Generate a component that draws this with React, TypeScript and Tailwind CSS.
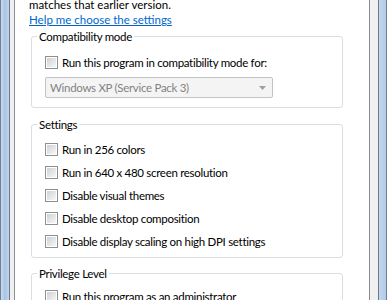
import React from "react";

const font = { fontFamily: 'Lato, "Liberation Sans", sans-serif' };

function Box() {
  return (
    <span className="w-[13px] h-[13px] shrink-0 border border-[#8e8f8f] bg-white flex items-center justify-center">
      <span className="w-[9px] h-[9px] bg-gradient-to-br from-[#cfd1d4] to-[#f7f7f7]" />
    </span>
  );
}

function Check({ label }: { label: string }) {
  return (
    <div className="flex items-center h-[23px] gap-[4px]">
      <Box />
      <span>{label}</span>
    </div>
  );
}

export default function App() {
  return (
    <div className="w-[387px] h-[300px] overflow-hidden flex text-[11.5px] tracking-[-0.3px] leading-[15px] text-black bg-[#f0f0f0]" style={font}>
      {/* left frame */}
      <div className="w-px bg-[#6f7f90]" />
      <div className="w-[8px] bg-gradient-to-r from-[#c9dbef] via-[#a9c3e2] to-[#c3d6ee]" />
      <div className="w-px bg-[#6b7a8a]" />
      <div className="w-[4px] bg-[#f0f0f0]" />
      <div className="w-px bg-[#898c95]" />
      {/* content */}
      <div className="w-[354px] bg-white pl-[14px]">
        <div className="mt-[-3px] tracking-normal">matches that earlier version.</div>
        <div className="text-[#0066cc] underline tracking-normal">Help me choose the settings</div>

        <fieldset className="mt-[2px] ml-[2px] w-[312px] border border-[#d5dfe5] rounded-[3px] pl-[13px] pt-[11px] pb-[9px]">
          <legend className="ml-[-8px] px-[2px]">Compatibility mode</legend>
          <div className="flex items-center h-[15px] gap-[4px]">
            <Box />
            <span>Run this program in compatibility mode for:</span>
          </div>
          <div className="mt-[7px] w-[228px] h-[21px] border border-[#c3c3c3] rounded-[2px] bg-[#f4f4f4] flex items-center justify-between pl-[4px] pr-[6px] text-[#838383]">
            <span>Windows XP (Service Pack 3)</span>
            <svg width="7" height="4" viewBox="0 0 7 4"><path d="M0 0h7L3.5 4z" fill="#a0a0a0" /></svg>
          </div>
        </fieldset>

        <fieldset className="mt-[9px] ml-[2px] w-[312px] border border-[#d5dfe5] rounded-[3px] pl-[13px] pt-[6px] pb-[4px]">
          <legend className="ml-[-8px] px-[2px]">Settings</legend>
          <Check label="Run in 256 colors" />
          <Check label="Run in 640 x 480 screen resolution" />
          <Check label="Disable visual themes" />
          <Check label="Disable desktop composition" />
          <Check label="Disable display scaling on high DPI settings" />
        </fieldset>

        <fieldset className="mt-[8px] ml-[2px] w-[312px] border border-[#d5dfe5] rounded-[3px] pl-[13px] pt-[4px] pb-[4px]">
          <legend className="ml-[-8px] px-[2px]">Privilege Level</legend>
          <Check label="Run this program as an administrator" />
        </fieldset>
      </div>
      {/* right frame */}
      <div className="w-px bg-[#898c95]" />
      <div className="w-[8px] bg-[#f0f0f0]" />
      <div className="w-px bg-[#6b7a8a]" />
      <div className="w-[7px] bg-gradient-to-r from-[#c3d6ee] to-[#b3cbe8]" />
      <div className="w-px bg-[#6f7f90]" />
    </div>
  );
}
